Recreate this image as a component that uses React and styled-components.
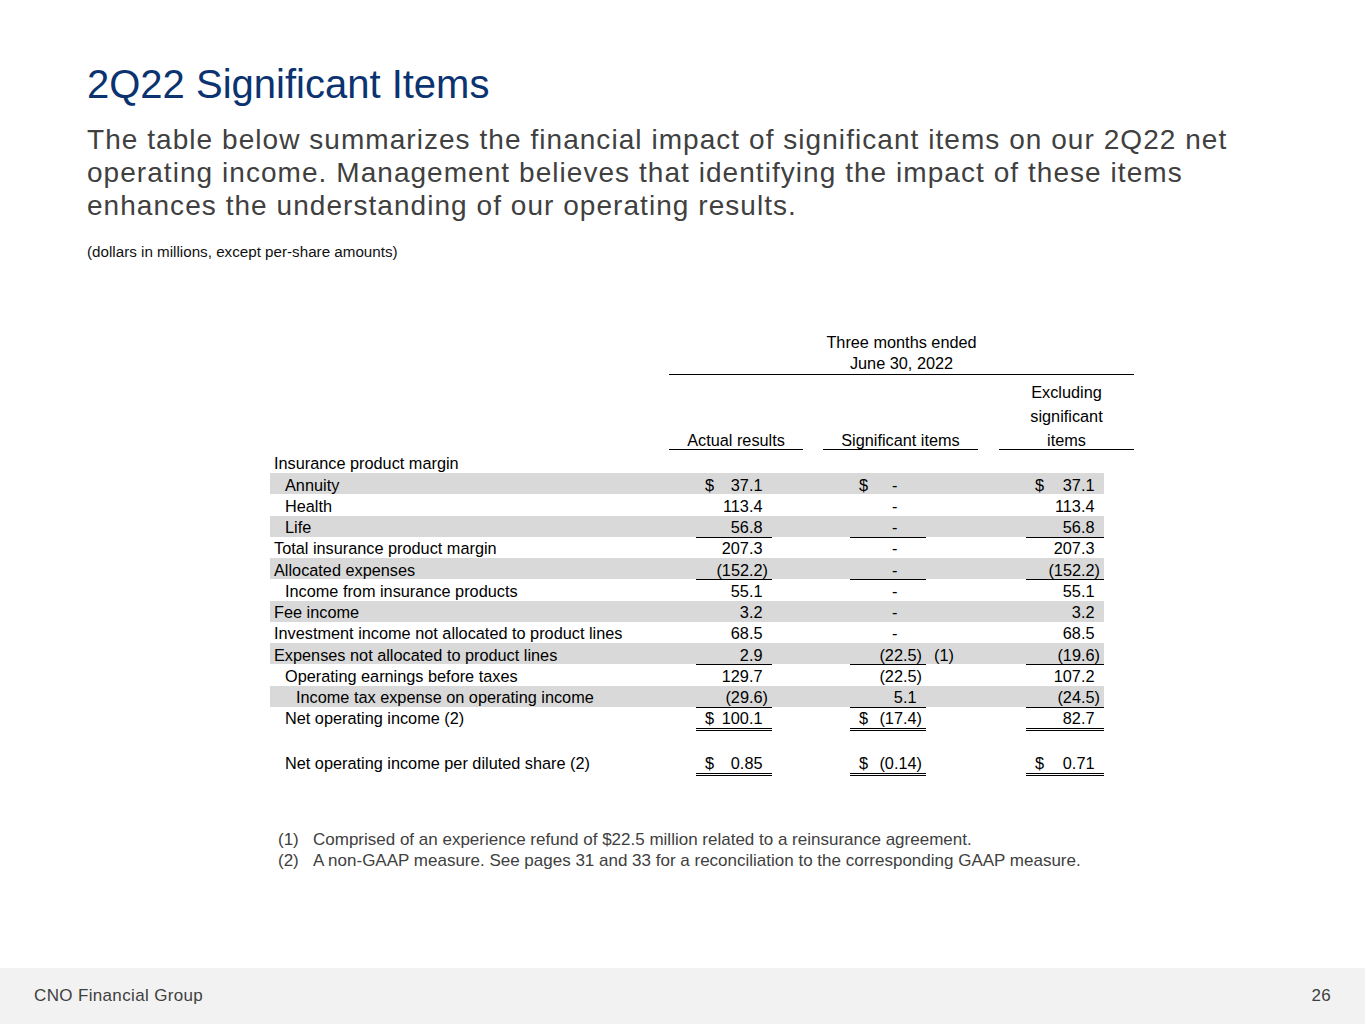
import React from "react";
import styled, { createGlobalStyle, css } from "styled-components";

const GlobalStyle = createGlobalStyle`
  html, body { margin: 0; padding: 0; background: #ffffff; }
  body { font-family: "Liberation Sans", Arial, sans-serif; }
  * { box-sizing: content-box; }
`;

const COLS_HEAD = "399px 27px 76px 31px 20px 27px 76px 52px 21px 27px 78px 30px";
const COLS_BODY = "426px 76px 78px 76px 100px 78px";

const Slide = styled.div`
  width: 1365px;
  height: 1024px;
  display: flex;
  flex-direction: column;
  overflow: hidden;
`;

const Main = styled.main`
  flex: 1;
  padding: 64px 0 0 87px;
`;

const Title = styled.h1`
  margin: 0;
  font-size: 40px;
  line-height: 40px;
  font-weight: 400;
  color: #0b3370;
`;

const Lead = styled.p`
  margin: 19px 0 0;
  max-width: 1200px;
  font-size: 28px;
  line-height: 33px;
  letter-spacing: 1.05px;
  color: #404040;
`;

const Units = styled.p`
  margin: 20.7px 0 0;
  font-size: 15.2px;
  line-height: 18px;
  color: #111;
`;

const FinTable = styled.section`
  margin: 71.3px 0 0 183px;
  font-size: 16.3px;
  color: #000;
`;

const HeadGrid = styled.div`
  display: grid;
  grid-template-columns: ${COLS_HEAD};
`;

const PeriodCell = styled.div`
  grid-column: 2 / 13;
  grid-row: 1;
  text-align: center;
  line-height: 21px;
  border-bottom: 1px solid #000;
`;

const ColHead = styled.div`
  grid-column: ${(p) => p.$span};
  grid-row: 2;
  display: flex;
  flex-direction: column;
  justify-content: flex-end;
  text-align: center;
  line-height: 24px;
  padding-top: 5px;
  border-bottom: 1px solid #000;
`;

const ColHeadText = styled.span`
  margin-bottom: -3px;
`;

const Body = styled.div`
  margin-top: 2px;
`;

const Row = styled.div`
  display: grid;
  grid-template-columns: ${COLS_BODY};
  width: 834px;
  line-height: 18.75px;
  background: ${(p) => (p.$shade ? "#d9d9d9" : "transparent")};
`;

const Label = styled.div`
  grid-column: 1;
  grid-row: 1;
  padding: 2.5px 0 0 ${(p) => 4 + p.$level * 11}px;
  white-space: nowrap;
`;

const Val = styled.div`
  grid-column: ${(p) => p.$col};
  grid-row: 1;
  display: flex;
  justify-content: space-between;
  padding: 2.5px 9.5px 0 9px;
  white-space: nowrap;
  ${(p) =>
    p.$u === "single" &&
    css`
      border-bottom: 1px solid #000;
      margin-bottom: -1px;
    `}
  ${(p) =>
    p.$u === "double" &&
    css`
      border-bottom: 3px double #000;
      margin-bottom: -3px;
    `}
`;

const Dash = styled.span`
  margin-right: 19px;
`;

const Neg = styled.span`
  margin-right: -5.5px;
`;

const NoteRef = styled.div`
  grid-column: 5;
  grid-row: 1;
  padding: 2.5px 0 0 8px;
`;

const Spacer = styled.div`
  height: 23.25px;
`;

const Footnotes = styled.ol`
  list-style: none;
  margin: 56.5px 0 0 191px;
  padding: 0;
  font-size: 17px;
  line-height: 21px;
  color: #404040;
`;

const Footnote = styled.li`
  display: grid;
  grid-template-columns: 35px auto;
`;

const Footer = styled.footer`
  height: 56px;
  flex: none;
  background: #f2f2f2;
  display: flex;
  align-items: center;
  justify-content: space-between;
  padding: 0 34px;
  font-size: 17px;
  letter-spacing: 0.35px;
  color: #404040;
`;

const rows = [
  { label: "Insurance product margin", level: 0 },
  { label: "Annuity", level: 1, shade: true, vals: [["37.1", 1], ["-", 1], ["37.1", 1]] },
  { label: "Health", level: 1, vals: [["113.4"], ["-"], ["113.4"]] },
  { label: "Life", level: 1, shade: true, u: "single", vals: [["56.8"], ["-"], ["56.8"]] },
  { label: "Total insurance product margin", level: 0, vals: [["207.3"], ["-"], ["207.3"]] },
  { label: "Allocated expenses", level: 0, shade: true, u: "single", vals: [["(152.2)"], ["-"], ["(152.2)"]] },
  { label: "Income from insurance products", level: 1, vals: [["55.1"], ["-"], ["55.1"]] },
  { label: "Fee income", level: 0, shade: true, vals: [["3.2"], ["-"], ["3.2"]] },
  { label: "Investment income not allocated to product lines", level: 0, vals: [["68.5"], ["-"], ["68.5"]] },
  { label: "Expenses not allocated to product lines", level: 0, shade: true, u: "single", note: "(1)", vals: [["2.9"], ["(22.5)"], ["(19.6)"]] },
  { label: "Operating earnings before taxes", level: 1, vals: [["129.7"], ["(22.5)"], ["107.2"]] },
  { label: "Income tax expense on operating income", level: 2, shade: true, u: "single", vals: [["(29.6)"], ["5.1"], ["(24.5)"]] },
  { label: "Net operating income (2)", level: 1, u: "double", vals: [["100.1", 1], ["(17.4)", 1], ["82.7"]] },
  { spacer: true },
  { label: "Net operating income per diluted share (2)", level: 1, u: "double", vals: [["0.85", 1], ["(0.14)", 1], ["0.71", 1]] },
];

const VAL_COLS = [2, 4, 6];

function Amount({ v }) {
  if (v === "-") return <Dash>-</Dash>;
  if (v.startsWith("(")) return <Neg>{v}</Neg>;
  return <span>{v}</span>;
}

export default function App() {
  return (
    <>
      <GlobalStyle />
      <Slide>
        <Main>
          <Title>2Q22 Significant Items</Title>
          <Lead>
            The table below summarizes the financial impact of significant items on our 2Q22 net
            operating income. Management believes that identifying the impact of these items
            enhances the understanding of our operating results.
          </Lead>
          <Units>(dollars in millions, except per-share amounts)</Units>

          <FinTable>
            <HeadGrid>
              <PeriodCell>
                Three months ended
                <br />
                June 30, 2022
              </PeriodCell>
              <ColHead $span="2 / 5">
                <ColHeadText>Actual results</ColHeadText>
              </ColHead>
              <ColHead $span="6 / 9">
                <ColHeadText>Significant items</ColHeadText>
              </ColHead>
              <ColHead $span="10 / 13">
                <ColHeadText>
                  Excluding
                  <br />
                  significant
                  <br />
                  items
                </ColHeadText>
              </ColHead>
            </HeadGrid>
            <Body>
              {rows.map((r, i) =>
                r.spacer ? (
                  <Spacer key={i} />
                ) : (
                  <Row key={i} $shade={r.shade}>
                    <Label $level={r.level}>{r.label}</Label>
                    {r.vals &&
                      r.vals.map(([v, cur], j) => (
                        <Val key={j} $col={VAL_COLS[j]} $u={r.u}>
                          <span>{cur ? "$" : ""}</span>
                          <Amount v={v} />
                        </Val>
                      ))}
                    {r.note && <NoteRef>{r.note}</NoteRef>}
                  </Row>
                )
              )}
            </Body>
          </FinTable>

          <Footnotes>
            <Footnote>
              <span>(1)</span>
              <span>Comprised of an experience refund of $22.5 million related to a reinsurance agreement.</span>
            </Footnote>
            <Footnote>
              <span>(2)</span>
              <span>A non-GAAP measure. See pages 31 and 33 for a reconciliation to the corresponding GAAP measure.</span>
            </Footnote>
          </Footnotes>
        </Main>
        <Footer>
          <span>CNO Financial Group</span>
          <span>26</span>
        </Footer>
      </Slide>
    </>
  );
}
